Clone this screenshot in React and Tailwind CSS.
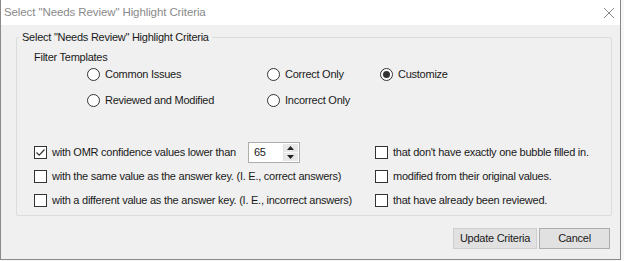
import React from 'react';

const font = { fontFamily: '"Liberation Sans", Arial, sans-serif' };

function Radio({ label, checked }) {
  return (
    <label className="flex items-center gap-[5px] whitespace-nowrap">
      <span className="w-[13px] h-[13px] rounded-full border border-[#333] bg-white flex items-center justify-center shrink-0">
        {checked && <span className="w-[7px] h-[7px] rounded-full bg-[#333]" />}
      </span>
      <span>{label}</span>
    </label>
  );
}

function Check({ label, checked }) {
  return (
    <label className="flex items-center gap-[5px] whitespace-nowrap">
      <span className="w-[13px] h-[13px] border border-[#333] bg-white flex items-center justify-center shrink-0">
        {checked && (
          <svg width="11" height="11" viewBox="0 0 11 11">
            <path d="M1.5 5.5 L4.2 8.2 L9.5 2.5" fill="none" stroke="#333" strokeWidth="1.2" />
          </svg>
        )}
      </span>
      <span>{label}</span>
    </label>
  );
}

function Spinner() {
  return (
    <div className="ml-[12px] w-[52px] h-[21px] border border-[#adadad] bg-white flex shrink-0">
      <div className="flex-1 pl-[5px] leading-[19px]">65</div>
      <div className="w-[15px] my-[1px] mr-[1px] flex flex-col bg-[#e8e8e8] border-l border-[#e0e0e0]">
        <div className="flex-1 flex items-center justify-center border-b border-[#f8f8f8]">
          <svg width="7" height="4" viewBox="0 0 7 4"><path d="M0 4 L3.5 0 L7 4 Z" fill="#222" /></svg>
        </div>
        <div className="flex-1 flex items-center justify-center">
          <svg width="7" height="4" viewBox="0 0 7 4"><path d="M0 0 L3.5 4 L7 0 Z" fill="#222" /></svg>
        </div>
      </div>
    </div>
  );
}

export default function App() {
  return (
    <div className="w-[624px] h-[261px] bg-[#f7f7f7] overflow-hidden">
      <div style={font} className="w-[621px] h-[260px] bg-[#f0f0f0] border-l border-r border-b border-[#8a8a8a] flex flex-col text-[11px] tracking-[-0.25px] text-[#1a1a1a]">
        {/* Title bar */}
        <div className="h-[25px] shrink-0 bg-white flex items-center justify-between pl-[3px] pr-[5px]">
          <span className="text-[#8a8a8a] text-[11.5px] tracking-[-0.1px]">Select "Needs Review" Highlight Criteria</span>
          <svg width="12" height="12" viewBox="0 0 12 12">
            <path d="M1 1 L11 11 M11 1 L1 11" stroke="#8a8a8a" strokeWidth="1" />
          </svg>
        </div>

        {/* Group box */}
        <fieldset className="ml-[15px] mr-[8px] mt-[5px] h-[186px] shrink-0 border border-[#dcdcdc] rounded-[2px] p-0 min-w-0">
          <legend className="ml-[2px] px-[3px] leading-[15px]">Select "Needs Review" Highlight Criteria</legend>
          <div className="pl-[17px] mt-[5px] leading-[15px]">Filter Templates</div>
          <div className="pl-[70px] mt-[2px] grid grid-cols-[180px_113px_auto] gap-y-[11px] leading-[15px]">
            <Radio label="Common Issues" />
            <Radio label="Correct Only" />
            <Radio label="Customize" checked />
            <Radio label="Reviewed and Modified" />
            <Radio label="Incorrect Only" />
          </div>
          <div className="pl-[17px] mt-[32px] grid grid-cols-[341px_auto] auto-rows-[24px] items-center leading-[15px]">
            <div className="flex items-center">
              <Check label="with OMR confidence values lower than" checked />
              <Spinner />
            </div>
            <Check label="that don't have exactly one bubble filled in." />
            <Check label="with the same value as the answer key. (I. E., correct answers)" />
            <Check label="modified from their original values." />
            <Check label="with a different value as the answer key. (I. E., incorrect answers)" />
            <Check label="that have already been reviewed." />
          </div>
        </fieldset>

        {/* Buttons */}
        <div className="flex justify-end gap-[2px] mt-[12px] pr-[10px]">
          <button className="w-[84px] h-[21px] bg-[#e1e1e1] border border-[#cfcfcf] tracking-[-0.25px]">Update Criteria</button>
          <button className="w-[71px] h-[21px] bg-[#e1e1e1] border border-[#adadad] tracking-[-0.25px]">Cancel</button>
        </div>
      </div>
    </div>
  );
}
